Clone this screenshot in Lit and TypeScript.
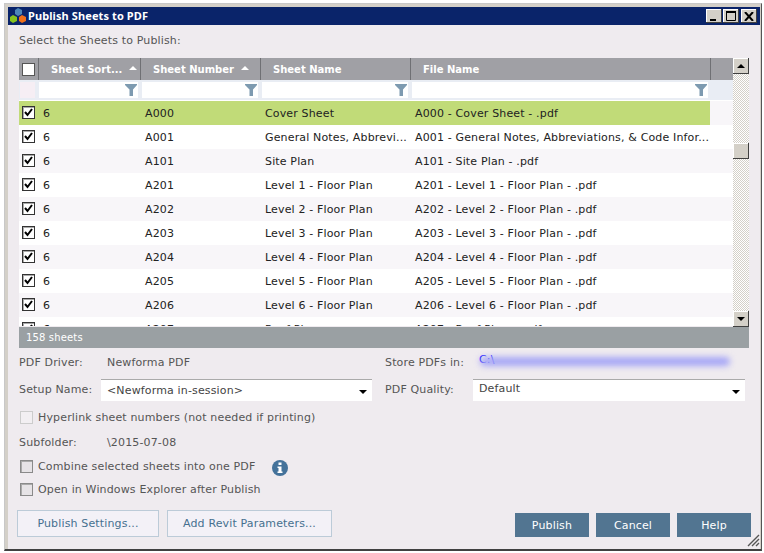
import { LitElement, html, css, svg } from 'lit';
import { customElement } from 'lit/decorators.js';

const sheets = [
  ['A000', 'Cover Sheet', 'A000 - Cover Sheet - .pdf'],
  ['A001', 'General Notes, Abbrevi...', 'A001 - General Notes, Abbreviations, & Code Infor...'],
  ['A101', 'Site Plan', 'A101 - Site Plan - .pdf'],
  ['A201', 'Level 1 - Floor Plan', 'A201 - Level 1 - Floor Plan - .pdf'],
  ['A202', 'Level 2 - Floor Plan', 'A202 - Level 2 - Floor Plan - .pdf'],
  ['A203', 'Level 3 - Floor Plan', 'A203 - Level 3 - Floor Plan - .pdf'],
  ['A204', 'Level 4 - Floor Plan', 'A204 - Level 4 - Floor Plan - .pdf'],
  ['A205', 'Level 5 - Floor Plan', 'A205 - Level 5 - Floor Plan - .pdf'],
  ['A206', 'Level 6 - Floor Plan', 'A206 - Level 6 - Floor Plan - .pdf'],
  ['A207', 'Roof Plan', 'A207 - Roof Plan - .pdf'],
];

const funnel = svg`<svg class="funnel" width="12" height="12" viewBox="0 0 12 12"><path d="M0 0H12V1L8 5.5V12H4.5V5.5L0 1Z" fill="#7d9ab0"/></svg>`;
const tick = svg`<svg width="9" height="9" viewBox="0 0 9 9"><path d="M1 4L3.5 7L8 1" fill="none" stroke="#000" stroke-width="2"/></svg>`;

@customElement('app-root')
export class AppRoot extends LitElement {
  static styles = css`
    :host {
      display: block;
      width: 764px;
      height: 553px;
      background: #fff;
      font-family: 'DejaVu Sans', Verdana, sans-serif;
      font-size: 11px;
      letter-spacing: 0.15px;
      color: #555;
      overflow: hidden;
    }
    .window {
      position: relative;
      box-sizing: border-box;
      width: 758px;
      height: 548px;
      margin: 3px 0 0 4px;
      border: 1px solid #c8c8c8;
      border-right-color: #555;
      border-bottom: 2px solid #404040;
      background: #d4d0c8;
      padding: 3px 1px 0 3px;
      display: flex;
      flex-direction: column;
    }
    .title {
      flex: none;
      height: 18px;
      background: #0a246a;
      color: #fff;
      font-family: 'Noto Sans', sans-serif;
      font-weight: bold;
      letter-spacing: 0.1px;
      display: flex;
      align-items: center;
      padding-left: 1px;
      gap: 1px;
    }
    .title svg { flex: none; }
    .title span { flex: 1; margin-top: -1px; }
    .caption { display: flex; margin-right: 3px; }
    .caption div {
      width: 16px;
      height: 14px;
      margin-left: 1px;
      background: #d4d0c8;
      box-shadow: inset -1px -1px #404040, inset 1px 1px #fff;
      display: flex;
      align-items: center;
      justify-content: center;
    }
    .caption .close { margin-left: 2px; }
    .body {
      flex: 1;
      background: #efebef;
      padding: 0 11px;
      display: flex;
      flex-direction: column;
      min-height: 0;
    }
    .intro { height: 33px; line-height: 32px; }
    .grid { height: 290px; width: 730px; display: flex; flex-direction: column; flex: none; }
    .top { display: flex; flex: 1; min-height: 0; }
    .table { width: 714px; overflow: hidden; }
    .row { display: grid; grid-template-columns: 19px 102px 120px 150px 300px 23px; align-items: center; }
    .head { height: 22px; background: #a0a0a5; color: #fff; font-weight: bold; font-size: 10px; letter-spacing: 0; }
    .head > div { height: 22px; line-height: 23px; padding-left: 12px; box-sizing: border-box; border-left: 1px solid #6f7074; position: relative; white-space: nowrap; }
    .head > .boxcell { padding: 0; border-left: 0; display: flex; align-items: center; justify-content: center; }
    .arrow { position: absolute; right: 3px; top: 8px; width: 0; height: 0; border: 4px solid transparent; border-top: 0; border-bottom-color: #fff; }
    .head .num .arrow { right: 11px; }
    .filter { height: 20px; background: #e9edf4; align-items: start; padding-top: 2px; box-sizing: border-box; }
    .filter > div { height: 16px; background: #fff; margin: 0 2px; display: flex; justify-content: flex-end; align-items: center; padding-right: 1px; }
    .filter > .first { margin-left: 1px; }
    .filter > .blank { background: #f6eef4; margin: 0 0 0 1px; padding: 0; width: 15px; }
    .filter > .none { background: none; margin: 0; }
    .rows { height: 226px; overflow: hidden; border-top: 1px solid #fff; box-sizing: border-box; }
    .cells { height: 24px; color: #222; background: #fff; }
    .cells:nth-child(odd) { background: #f8f6f9; }
    .cells.current > div:not(.tail) { background: #c1db78; }
    .cells > div { height: 24px; line-height: 25px; white-space: nowrap; overflow: hidden; padding-left: 5px; box-sizing: border-box; }
    .cells > .boxcell { padding: 0 0 1px; display: flex; align-items: center; justify-content: center; }
    .box {
      width: 11px;
      height: 11px;
      background: #fff;
      border: 1px solid #707070;
      box-shadow: inset 1px 1px #aaa;
      display: flex;
      align-items: center;
      justify-content: center;
    }
    .rowbox { border-color: #333; }
    .head .box { border-color: #555; box-shadow: none; }
    .scroll {
      width: 16px;
      height: 269px;
      background: repeating-conic-gradient(#d4d0c8 0 25%, #fff 0 50%) 0 0 / 2px 2px;
      display: flex;
      flex-direction: column;
    }
    .sbtn {
      flex: none;
      width: 16px;
      height: 16px;
      background: #d4d0c8;
      box-shadow: inset -1px -1px #404040, inset 1px 1px #fff;
      display: flex;
      align-items: center;
      justify-content: center;
    }
    .up { width: 0; height: 0; border: 4px solid transparent; border-top: 0; border-bottom-color: #000; }
    .down { width: 0; height: 0; border: 4px solid transparent; border-bottom: 0; border-top-color: #000; }
    .thumb { margin-top: 69px; }
    .spacer { flex: 1; }
    .status { flex: none; height: 21px; line-height: 21px; background: #9aa0a3; color: #fff; padding-left: 7px; font-size: 10px; box-sizing: border-box; }
    .form { display: grid; grid-template-columns: 366px 1fr; width: 726px; }
    .field { display: flex; align-items: center; }
    .field label { flex: none; }
    .driver { margin-top: 2px; height: 26px; padding-bottom: 1px; box-sizing: border-box; }
    .driver label { width: 88px; }
    .store label { width: 94px; }
    .setup { margin-top: 3px; height: 22px; }
    .setup label { width: 82px; padding-bottom: 1px; }
    .quality { margin-top: 3px; height: 22px; }
    .quality label { width: 88px; padding-bottom: 1px; }
    .select {
      box-sizing: border-box;
      height: 22px;
      background: #fff;
      border-top: 1px solid #aaa;
      display: flex;
      align-items: center;
      padding: 0 6px;
      position: relative;
      color: #444;
    }
    .select::after { content: ''; position: absolute; right: 5px; top: 10px; border: 4px solid transparent; border-bottom: 0; border-top-color: #000; }
    .select.name { width: 271px; }
    .select.pdf { width: 272px; padding-bottom: 4px; }
    .path { position: relative; color: #11f; top: -3px; }
    .smear { position: absolute; left: 1px; top: 4px; width: 250px; height: 9px; background: #a5a5f6; filter: blur(3px); border-radius: 6px; }
    .check { display: flex; align-items: center; gap: 5px; height: 24px; padding-left: 1px; }
    .check .box { border-color: #8a8a8a; background: #e6e3e6; box-shadow: inset 1px 1px #aaa; }
    .link { margin-top: 4px; }
    .link .box { border-color: #ccc; background: #f2eff2; box-shadow: none; }
    .sub { display: flex; height: 24px; align-items: center; margin-top: 1px; }
    .sub label { width: 88px; }
    .info { margin: 4px 0 0 12px; }
    .combine { height: 23px; }
    .foot { display: flex; align-items: flex-start; margin: 9px 0 0 -2px; width: 734px; }
    .ghost {
      box-sizing: border-box;
      height: 27px;
      display: flex;
      align-items: center;
      justify-content: center;
      background: #f3f1f7;
      border: 1px solid #bccbd8;
      color: #46708f;
    }
    .ghost.a { width: 142px; margin-right: 8px; }
    .ghost.b { width: 165px; }
    .solid {
      width: 74px;
      height: 24px;
      margin-top: 3px;
      margin-left: 7px;
      background: #527591;
      color: #fff;
      display: flex;
      align-items: center;
      justify-content: center;
    }
    .grip { position: absolute; right: 1px; bottom: 2px; }
  `;

  renderRow(s: string[], i: number) {
    return html`<div class="row cells ${i === 0 ? 'current' : ''}">
      <div class="boxcell"><div class="box rowbox">${tick}</div></div>
      <div>6</div>
      <div>${s[0]}</div>
      <div>${s[1]}</div>
      <div>${s[2]}</div>
      <div class="tail"></div>
    </div>`;
  }

  render() {
    return html`<div class="window">
      <div class="title">
        <svg width="18" height="17" viewBox="0 0 18 17">
          <path d="M6 2L9 0L13 2V6L9 8L6 6Z" fill="#4d86b8"/>
          <path d="M1 9L4 7L8 9V13L4 15L1 13Z" fill="#86c41e"/>
          <path d="M10 9L13 7L17 9V13L13 15L10 13Z" fill="#f0701a"/>
        </svg>
        <span>Publish Sheets to PDF</span>
        <div class="caption">
          <div><svg width="10" height="10" viewBox="0 0 10 10"><path d="M1 8H7V10H1Z" fill="#000"/></svg></div>
          <div><svg width="11" height="10" viewBox="0 0 11 10"><path d="M.5 1.5H9.5V9.5H.5Z" fill="none" stroke="#000"/><path d="M0 0H10V2H0Z"/></svg></div>
          <div class="close"><svg width="10" height="9" viewBox="0 0 10 9"><path d="M1 0L9 9M9 0L1 9" stroke="#000" stroke-width="2"/></svg></div>
        </div>
      </div>
      <div class="body">
        <div class="intro">Select the Sheets to Publish:</div>
        <div class="grid">
          <div class="top">
            <div class="table">
              <div class="row head">
                <div class="boxcell"><div class="box"></div></div>
                <div>Sheet Sort...<i class="arrow"></i></div>
                <div class="num">Sheet Number<i class="arrow"></i></div>
                <div>Sheet Name</div>
                <div>File Name</div>
                <div></div>
              </div>
              <div class="row filter">
                <div class="blank"></div>
                <div class="first">${funnel}</div>
                <div>${funnel}</div>
                <div>${funnel}</div>
                <div>${funnel}</div>
                <div class="none"></div>
              </div>
              <div class="rows">${sheets.map((s, i) => this.renderRow(s, i))}</div>
            </div>
            <div class="scroll">
              <div class="sbtn"><i class="up"></i></div>
              <div class="sbtn thumb"></div>
              <div class="spacer"></div>
              <div class="sbtn"><i class="down"></i></div>
            </div>
          </div>
          <div class="status">158 sheets</div>
        </div>
        <div class="form">
          <div class="field driver"><label>PDF Driver:</label><span>Newforma PDF</span></div>
          <div class="field driver store"><label>Store PDFs in:</label>
            <span class="path">C:\\<i class="smear"></i></span></div>
          <div class="field setup"><label>Setup Name:</label><div class="select name">&lt;Newforma in-session&gt;</div></div>
          <div class="field quality"><label>PDF Quality:</label><div class="select pdf">Default</div></div>
        </div>
        <div class="check link"><div class="box"></div>Hyperlink sheet numbers (not needed if printing)</div>
        <div class="sub"><label>Subfolder:</label><span>\\2015-07-08</span></div>
        <div class="check">
          <div class="box"></div>Combine selected sheets into one PDF
          <svg class="info" width="16" height="16" viewBox="0 0 16 16">
            <circle cx="8" cy="8" r="8" fill="#44729a"/>
            <rect x="6.5" y="2.5" width="3" height="2.5" fill="#fff"/>
            <path d="M5.5 6.5H9.5V11.5H10.5V13H5.5V11.5H6.5V8H5.5Z" fill="#fff"/>
          </svg>
        </div>
        <div class="check combine"><div class="box"></div>Open in Windows Explorer after Publish</div>
        <div class="foot">
          <div class="ghost a">Publish Settings...</div>
          <div class="ghost b">Add Revit Parameters...</div>
          <div class="spacer"></div>
          <div class="solid">Publish</div>
          <div class="solid">Cancel</div>
          <div class="solid">Help</div>
        </div>
      </div>
      <svg class="grip" width="13" height="13" viewBox="0 0 13 13">
        <path d="M12 1L1 12M12 5L5 12M12 9L9 12" stroke="#555" stroke-width="1.4"/>
      </svg>
    </div>`;
  }
}
